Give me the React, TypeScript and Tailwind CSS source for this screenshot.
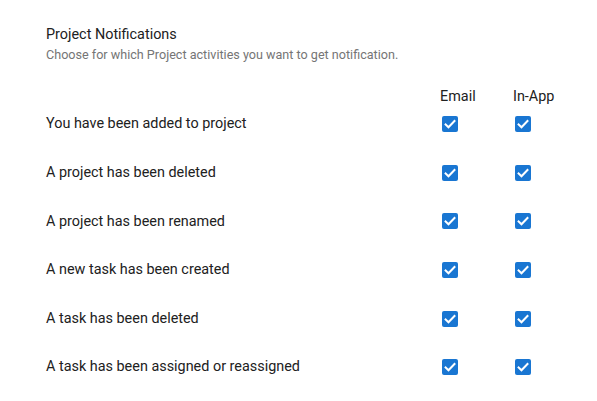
import React from "react";

const rows = [
  "You have been added to project",
  "A project has been deleted",
  "A project has been renamed",
  "A new task has been created",
  "A task has been deleted",
  "A task has been assigned or reassigned",
];

function Check() {
  return (
    <div className="w-[16px] h-[16px] rounded-[2px] bg-[#1976d2] flex items-center justify-center ml-[2px]">
      <svg width="16" height="16" viewBox="0 0 16 16" fill="none">
        <path d="M3.6 8.4l2.9 2.9 6-6.3" stroke="white" strokeWidth="2" strokeLinecap="square" strokeLinejoin="miter" />
      </svg>
    </div>
  );
}

export default function App() {
  return (
    <div className="w-[597px] h-[401px] bg-white pl-[46px] pr-[11px] pt-[25px]" style={{ fontFamily: "Roboto, sans-serif" }}>
      <div className="text-[14.4px] leading-[20px] text-[#212121]">Project Notifications</div>
      <div className="text-[12.6px] leading-[18px] text-[#757575] mt-[1px]">Choose for which Project activities you want to get notification.</div>
      <div className="grid grid-cols-[1fr_73px_73px] mt-[23px] text-[14.4px] text-[#212121]">
        <div className="h-[20px]" />
        <div className="leading-[20px]">Email</div>
        <div className="leading-[20px]">In-App</div>
        {rows.map((r, i) => (
          <React.Fragment key={i}>
            <div className={`flex items-center h-[48.6px] ${i === 0 ? "-mt-[7px]" : ""}`}>{r}</div>
            <div className={`flex items-center h-[48.6px] ${i === 0 ? "-mt-[7px]" : ""}`}><Check /></div>
            <div className={`flex items-center h-[48.6px] ${i === 0 ? "-mt-[7px]" : ""}`}><Check /></div>
          </React.Fragment>
        ))}
      </div>
    </div>
  );
}
